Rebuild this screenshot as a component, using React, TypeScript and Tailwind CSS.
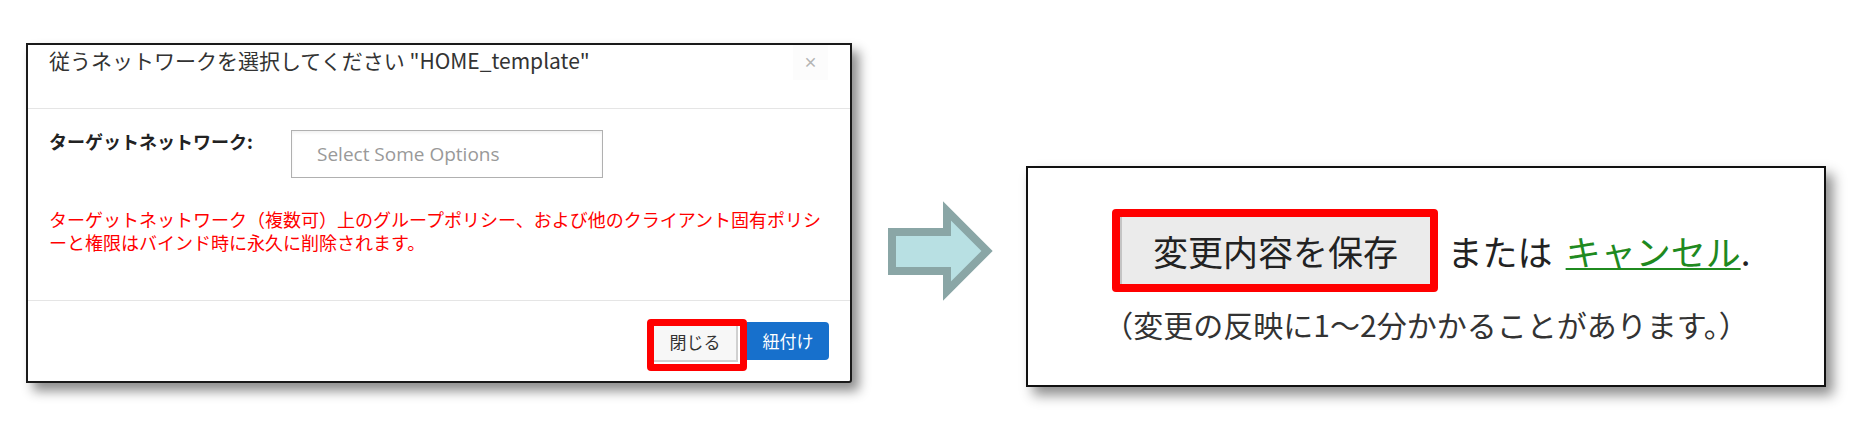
const JP = "font-['Noto_Sans_CJK_JP',sans-serif]";

function ArrowShape() {
  return (
    <svg width="116" height="108" viewBox="884 198 116 108" className="shrink-0">
      <polygon
        points="892,232 947,232 947,211 987,251 947,291 947,271 892,271"
        fill="#b8e0e3"
        stroke="#8aa6a6"
        strokeWidth="8"
        strokeLinejoin="miter"
      />
    </svg>
  );
}

function BindDialog() {
  return (
    <div className={"flex h-[340px] w-[826px] shrink-0 flex-col rounded-br-[3px] border-2 border-[#1a1a1a] bg-white text-[#333] shadow-[7px_8px_12px_rgba(0,0,0,0.45)] " + JP}>
      <div className="flex h-[64px] items-start justify-between border-b border-[#e5e5e5] pl-[21px] pr-[22px]">
        <h3 className="mt-0 text-[21px] leading-[30px] font-normal text-[#333]">
          従うネットワークを選択してください "HOME_template"
        </h3>
        <span className="flex h-[35px] w-[35px] items-center justify-center bg-[#fcfcfc] pb-[3px] text-[14px] font-bold text-[#b4b4b4]">×</span>
      </div>

      <div className="h-[191px] px-[21px] pt-[21px]">
        <div className="flex items-start">
          <label className="w-[242px] text-[18px] leading-[22px] font-bold text-[#222]">ターゲットネットワーク:</label>
          <div className="flex h-[48px] w-[312px] items-center border border-[#b0b0b0] pl-[25px] shadow-[inset_0_2px_3px_rgba(0,0,0,0.06)]">
            <span className="font-['Open_Sans',sans-serif] text-[19px] text-[#999]">Select Some Options</span>
          </div>
        </div>
        <p className="mt-[30px] text-[18px] leading-[23px] text-[#ff0000]">
          ターゲットネットワーク（複数可）上のグループポリシー、および他のクライアント固有ポリシ
          <br />
          ーと権限はバインド時に永久に削除されます。
        </p>
      </div>

      <div className="flex flex-1 items-start justify-end border-t border-[#e5e5e5] pr-[21px] pt-[18px]">
        <div className="h-[52px] w-[100px] rounded-[4px] border-[7px] border-[#ff0000]">
          <button className="flex h-[36px] w-[84px] items-center justify-center border-r-2 border-b-2 border-[#d0d0d0] bg-[#f7f7f7] pb-[2px] text-[17px] text-[#333]">
            閉じる
          </button>
        </div>
        <button className="mt-[3px] flex h-[38px] w-[82px] items-center justify-center rounded-r-[4px] bg-[#1770cc] text-[17px] text-white">
          紐付け
        </button>
      </div>
    </div>
  );
}

function SaveBar() {
  return (
    <div className={"flex h-[221px] w-[800px] shrink-0 flex-col items-center border-2 border-[#111] bg-white pt-[41px] shadow-[7px_8px_12px_rgba(0,0,0,0.45)] " + JP}>
      <div className="flex items-center pl-[10px]">
        <div className="h-[83px] w-[326px] rounded-[4px] border-[8px] border-[#ff0000]">
          <button className="flex h-full w-full items-center justify-center border-l-2 border-[#c4c4c4] bg-[#ebebeb] text-[35px] leading-none text-[#222]">
            変更内容を保存
          </button>
        </div>
        <span className="ml-[10px] text-[35px] leading-none text-[#222]">または</span>
        <a className="ml-[13px] text-[35px] leading-none text-[#1f8a1f] underline decoration-2 underline-offset-[2px]">キャンセル</a>
        <span className="text-[35px] leading-none text-[#222]">.</span>
      </div>
      <p className="mt-[13px] text-[30px] leading-[38px] text-[#333]">（変更の反映に1～2分かかることがあります。）</p>
    </div>
  );
}

export default function App() {
  return (
    <div className="flex h-[427px] w-[1865px] items-start overflow-hidden bg-white">
      <div className="ml-[26px] mt-[43px]">
        <BindDialog />
      </div>
      <div className="ml-[32px] mt-[198px]">
        <ArrowShape />
      </div>
      <div className="ml-[26px] mt-[166px]">
        <SaveBar />
      </div>
    </div>
  );
}
